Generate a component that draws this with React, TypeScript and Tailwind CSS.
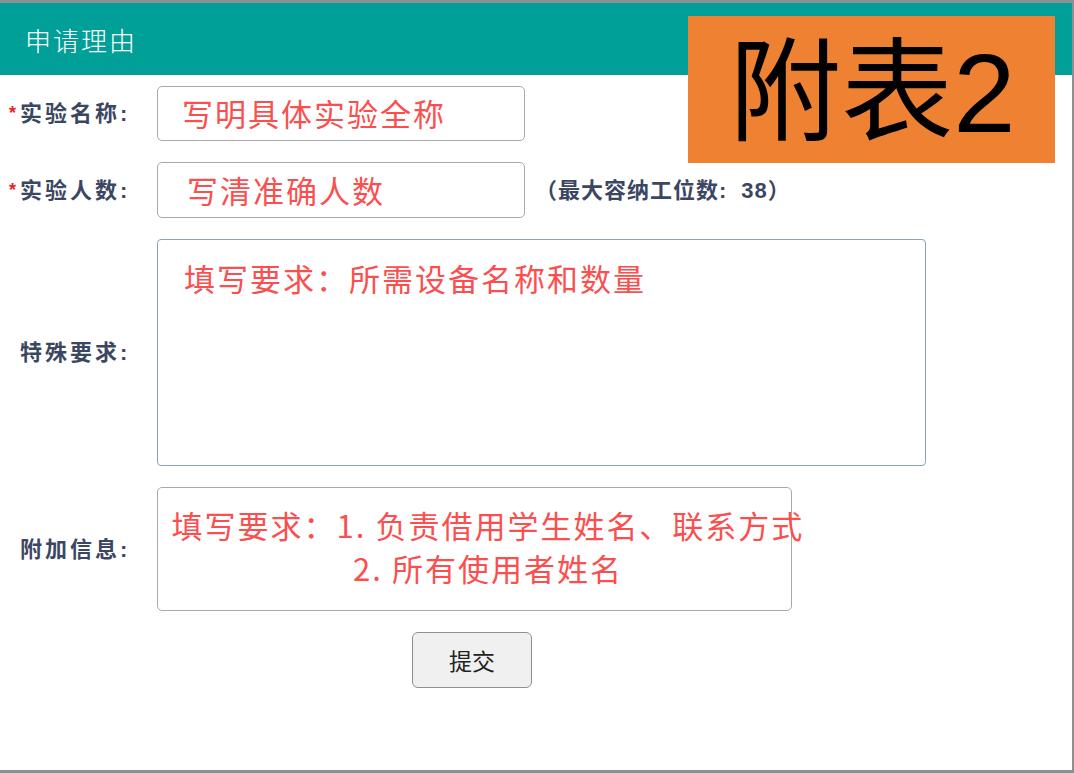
import React from 'react';

const cjk = { fontFamily: '"Noto Sans CJK SC", "Noto Sans", sans-serif' };
const labelFont = { fontFamily: '"Liberation Sans", "Noto Sans CJK SC", sans-serif' };

function Label({ text, required }: { text: string; required?: boolean }) {
  return (
    <div className="w-[157px] shrink-0 pl-[9px] flex items-center text-[22px] font-bold text-[#3b4762] tracking-[3px]" style={labelFont}>
      <span className="w-[11px] text-[#e8261f] text-[18px] tracking-normal">{required ? '*' : ''}</span>
      <span>{text}</span>
    </div>
  );
}

export default function App() {
  return (
    <div className="relative w-[1074px] h-[773px] bg-white border-t-[3px] border-r-[2px] border-b-[3px] border-[#8e8e93] overflow-hidden" style={cjk}>
      <div className="h-[72px] bg-[#009f97] flex items-center pl-[25px]">
        <h2 className="text-white text-[26px] tracking-[2px] font-light">申请理由</h2>
      </div>

      {/* 附表 stamp */}
      <div className="absolute left-[688px] top-[13px] w-[367px] h-[147px] bg-[#ef8232] flex items-center justify-center pt-[8px] pl-[2px]">
        <span className="text-black text-[112px] leading-none" style={{ fontFamily: '"Liberation Sans", "Noto Sans CJK SC", sans-serif' }}>附表2</span>
      </div>

      <div className="flex flex-col gap-[21px] pt-[11px]">
        <div className="flex items-center">
          <Label text="实验名称:" required />
          <div className="w-[368px] h-[55px] border border-[#a9a9a9] rounded-[5px] flex items-center pl-[24px] text-[31px] text-[#fb4f4f] tracking-[2px]">
            写明具体实验全称
          </div>
        </div>

        <div className="flex items-center">
          <Label text="实验人数:" required />
          <div className="w-[368px] h-[56px] border border-[#a9a9a9] rounded-[5px] flex items-center pl-[29px] text-[31px] text-[#fb4f4f] tracking-[2px]">
            写清准确人数
          </div>
          <span className="ml-[10px] text-[22px] font-bold text-[#3b4762] tracking-[1px]" style={labelFont}>
            （最大容纳工位数:<span className="ml-[14px]">38）</span>
          </span>
        </div>

        <div className="flex items-center">
          <Label text="特殊要求:" />
          <div className="w-[769px] h-[227px] border border-[#8fa4b1] rounded-[4px] pl-[26px] pt-[19px] text-[31px] leading-[37px] text-[#fb4f4f] tracking-[2px]">
            填写要求：所需设备名称和数量
          </div>
        </div>

        <div className="flex items-center">
          <Label text="附加信息:" />
          <div className="w-[635px] h-[124px] border border-[#a9a9a9] rounded-[5px] pt-[15px]">
            <div className="w-[660px] text-center text-[31px] leading-[43px] text-[#fb4f4f] tracking-[2px] whitespace-nowrap">
              <div>填写要求：1. 负责借用学生姓名、联系方式</div>
              <div>2. 所有使用者姓名</div>
            </div>
          </div>
        </div>

        <div className="flex pl-[412px]">
          <button className="w-[120px] h-[56px] bg-[#f0f0f0] border border-[#8e8e8e] rounded-[6px] text-[23px] text-[#222]">
            提交
          </button>
        </div>
      </div>
    </div>
  );
}
